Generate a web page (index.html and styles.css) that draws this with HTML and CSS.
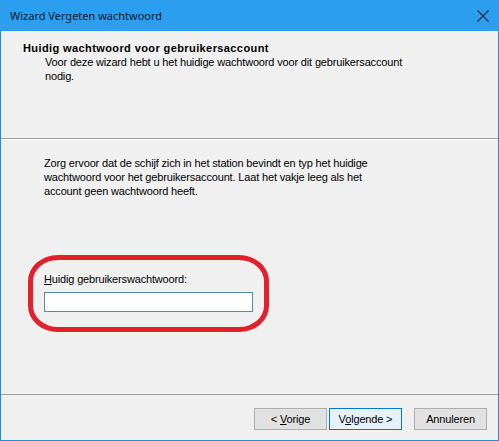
FILE: index.html
```html
<!DOCTYPE html>
<html lang="nl">
<head>
    <meta charset="UTF-8">
    <title>Wizard Vergeten wachtwoord</title>
    <link rel="stylesheet" href="styles.css">
</head>
<body>

<div class="window">
    <div class="titlebar">
        <span class="title">Wizard Vergeten wachtwoord</span>
        <svg class="close" width="12" height="12" viewBox="0 0 12 12">
            <path d="M0.5 0.5 L11.5 11.5 M11.5 0.5 L0.5 11.5" stroke="#1b2a3a" stroke-width="1.1" fill="none"/>
        </svg>
    </div>

    <div class="header">
        <div class="header-title">Huidig wachtwoord voor gebruikersaccount</div>
        <div class="header-desc">Voor deze wizard hebt u het huidige wachtwoord voor dit gebruikersaccount<br>nodig.</div>
    </div>

    <div class="content">
        <p class="intro">Zorg ervoor dat de schijf zich in het station bevindt en typ het huidige<br>wachtwoord voor het gebruikersaccount. Laat het vakje leeg als het<br>account geen wachtwoord heeft.</p>

        <div class="highlight">
            <label for="password"><u>H</u>uidig gebruikerswachtwoord:</label>
            <input type="password" id="password">
        </div>
    </div>

    <div class="footer">
        <button class="btn">&lt; <u>V</u>orige</button>
        <button class="btn default">V<u>o</u>lgende &gt;</button>
        <button class="btn cancel">Annuleren</button>
    </div>
</div>

</body>
</html>
```

FILE: styles.css
```css
/* Global */
body {
    margin: 0;
    padding: 0;
    font-family: 'Liberation Sans', Arial, sans-serif;
    font-size: 11px;
    letter-spacing: -0.16px;
    color: #000;
    background: #f0f0f0;
}

/* Window frame */
.window {
    width: 499px;
    height: 441px;
    box-sizing: border-box;
    border: 1px solid #1c8fdc;
    border-top: none;
    background: #f0f0f0;
    display: flex;
    flex-direction: column;
}

/* Title bar */
.titlebar {
    height: 31px;
    margin: 0 -1px;
    background: #2b9ef0;
    display: flex;
    align-items: center;
    justify-content: space-between;
    padding: 0 10px 0 10px;
}

.title {
    font-family: 'Noto Sans', sans-serif;
    font-size: 11px;
    letter-spacing: 0;
    color: #0a1a2a;
    padding-bottom: 1px;
}

.close {
    display: block;
    margin-top: 1px;
}

/* Header */
.header {
    height: 97px;
    padding: 10px 0 0 22px;
    border-bottom: 1px solid #a0a0a0;
    line-height: 14px;
}

.header-title {
    font-weight: bold;
    letter-spacing: 0.4px;
}

.header-desc {
    margin-left: 22px;
}

/* Content */
.content {
    flex: 1;
    border-top: 1px solid #fff;
    padding: 16px 0 0 27px;
}

.intro {
    margin: 0 0 0 16px;
    line-height: 14px;
}

.highlight {
    width: 220px;
    margin-top: 57px;
    padding: 12px 0 15px 11px;
    border: 5px solid #e3202b;
    border-radius: 30px / 26px;
}

.highlight label {
    display: block;
    line-height: 14px;
}

.highlight input {
    display: block;
    width: 209px;
    height: 20px;
    box-sizing: border-box;
    margin-top: 6px;
    border: 1px solid #5a8ba2;
    background: #fff;
    padding: 0 3px;
    outline: none;
}

/* Footer */
.footer {
    height: 46px;
    box-sizing: border-box;
    border-top: 1px solid #a0a0a0;
    padding: 13px 11px 0 0;
    display: flex;
    justify-content: flex-end;
    align-items: flex-start;
    gap: 2px;
}

.btn {
    width: 73px;
    height: 22px;
    padding: 0;
    font-family: 'Liberation Sans', Arial, sans-serif;
    font-size: 11px;
    letter-spacing: -0.16px;
    color: #000;
    background: #e1e1e1;
    border: 1px solid #adadad;
}

.btn.default {
    background: #e5f1fb;
    border-color: #0078d7;
}

.btn.cancel {
    margin-left: 10px;
}
```
